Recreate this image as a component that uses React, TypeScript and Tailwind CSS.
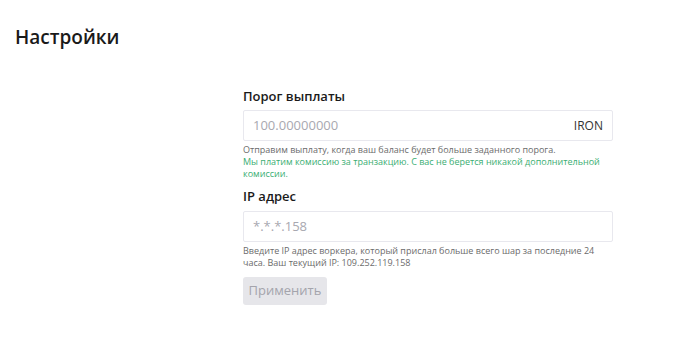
export default function App() {
  return (
    <div className="w-[690px] h-[337px] bg-white font-['Open_Sans',sans-serif] text-[#1a1a1a]">
      <h1 className="pl-[15px] pt-[25px] text-[19px] font-semibold leading-[24px]">Настройки</h1>
      <div className="ml-[243px] w-[370px] mt-[39px]">
        <label className="block text-[13px] font-semibold leading-[16px]">Порог выплаты</label>
        <div className="mt-[6px] h-[31px] border border-[#e8e8ee] rounded-[2px] flex items-center justify-between px-[9px]">
          <span className="text-[13px] text-[#a8a8b0]">100.00000000</span>
          <span className="text-[12px] text-[#333]">IRON</span>
        </div>
        <p className="mt-[3px] text-[9px] leading-[12px] text-[#6b6b6b]">
          Отправим выплату, когда ваш баланс будет больше заданного порога.
        </p>
        <p className="text-[9px] leading-[12px] text-[#3aae72]">
          Мы платим комиссию за транзакцию. С вас не берется никакой дополнительной комиссии.
        </p>
        <label className="block mt-[8px] text-[13px] font-semibold leading-[16px]">IP адрес</label>
        <div className="mt-[7px] h-[31px] border border-[#e8e8ee] rounded-[2px] flex items-center px-[9px]">
          <span className="text-[13px] text-[#a8a8b0]">*.*.*.158</span>
        </div>
        <p className="mt-[3px] text-[9px] leading-[12px] text-[#6b6b6b]">
          Введите IP адрес воркера, который прислал больше всего шар за последние 24 часа. Ваш текущий IP: 109.252.119.158
        </p>
        <button className="mt-[8px] h-[28px] w-[84px] rounded-[3px] bg-[#e6e6ea] text-[13px] text-[#a4a4ac]">
          Применить
        </button>
      </div>
    </div>
  );
}
